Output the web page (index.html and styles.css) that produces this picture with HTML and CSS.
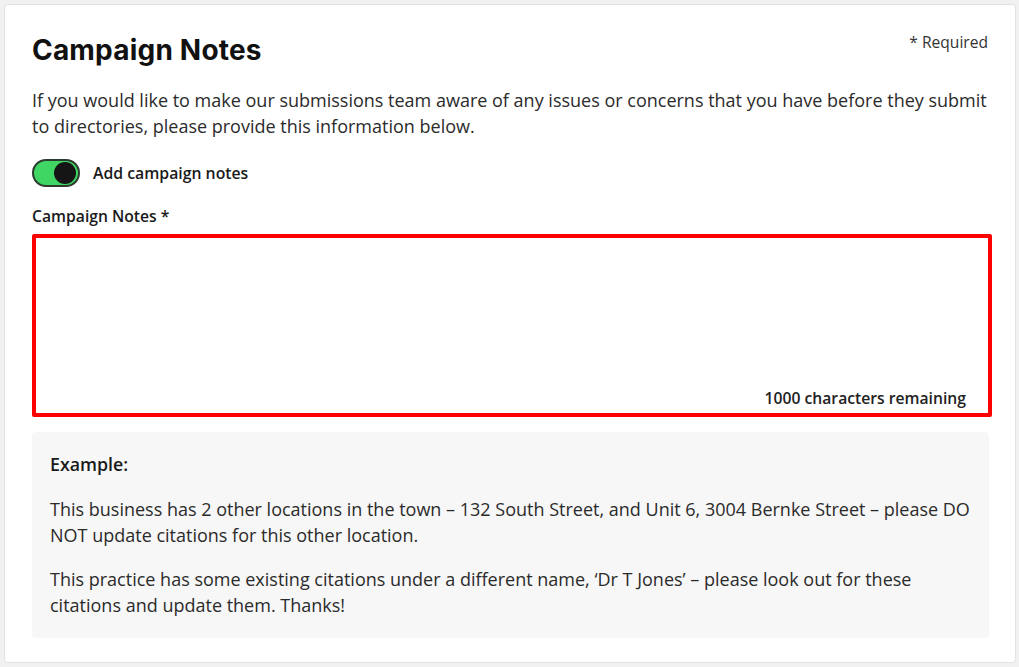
FILE: index.html
```html
<!DOCTYPE html>
<html lang="en">
<head>
  <meta charset="UTF-8" />
  <meta name="viewport" content="width=device-width, initial-scale=1.0"/>
  <title>Campaign Notes</title>
  <link rel="stylesheet" href="styles.css">
</head>
<body>
  <div class="card">
    <div class="card-head">
      <h1>Campaign Notes</h1>
      <span class="required">* Required</span>
    </div>
    <p class="intro">If you would like to make our submissions team aware of any issues or concerns that you have before they submit to directories, please provide this information below.</p>

    <label class="switch-row">
      <span class="switch"><span class="knob"></span></span>
      <span class="switch-label">Add campaign notes</span>
    </label>

    <div class="field-label">Campaign Notes *</div>
    <div class="notes-box">
      <textarea class="notes" maxlength="1000"></textarea>
      <div class="counter">1000 characters remaining</div>
    </div>

    <div class="example">
      <div class="example-title">Example:</div>
      <p>This business has 2 other locations in the town – 132 South Street, and Unit 6, 3004 Bernke Street – please DO NOT update citations for this other location.</p>
      <p>This practice has some existing citations under a different name, ‘Dr T Jones’ – please look out for these citations and update them. Thanks!</p>
    </div>
  </div>
</body>
</html>
```

FILE: styles.css
```css
body {
  margin: 0;
  padding: 4px 3px 4px 4px;
  background-color: #f1f1f1;
  font-family: 'Open Sans', sans-serif;
  color: #222;
}
.card {
  background-color: white;
  border: 1px solid #e2e2e2;
  border-radius: 4px;
  padding: 23px 26px 26px 27px;
  height: 659px;
  box-sizing: border-box;
}
.card-head {
  display: flex;
  justify-content: space-between;
  align-items: flex-start;
}
h1 {
  font-family: 'Inter', sans-serif;
  font-weight: 700;
  font-size: 28px;
  letter-spacing: 0.2px;
  color: #111;
  margin: 6px 0 0 0;
  line-height: 32px;
}
.required {
  font-size: 15.6px;
  color: #333;
  margin-top: 3px;
  margin-right: 1px;
}
.intro {
  font-size: 18px;
  line-height: 26px;
  margin: 21px 0 0 0;
  color: #2b2b2b;
}
.switch-row {
  display: flex;
  align-items: center;
  margin-top: 20px;
}
.switch {
  height: 24px;
  width: 40px;
  background-color: #3fd663;
  border: 2px solid #2d3a30;
  border-radius: 14px;
  display: flex;
  align-items: center;
  justify-content: flex-end;
  padding: 0 2px;
  box-sizing: content-box;
}
.knob {
  width: 22px;
  height: 22px;
  border-radius: 50%;
  background-color: #151515;
}
.switch-label {
  font-weight: 600;
  font-size: 15.8px;
  margin-left: 13px;
  color: #1a1a1a;
}
.field-label {
  font-weight: 600;
  font-size: 15.7px;
  margin-top: 18px;
  color: #1a1a1a;
}
.notes-box {
  position: relative;
  margin-top: 7px;
  margin-right: -3px;
}
.notes {
  display: block;
  width: 100%;
  height: 183px;
  box-sizing: border-box;
  border: 4px solid #ff0000;
  border-radius: 2px;
  resize: none;
  outline: none;
  font-family: 'Open Sans', sans-serif;
  font-size: 16px;
  padding: 10px 14px;
}
.counter {
  position: absolute;
  right: 26px;
  bottom: 8px;
  font-weight: 600;
  font-size: 15.7px;
  color: #222;
}
.example {
  background-color: #f7f7f7;
  border-radius: 4px;
  margin-top: 15px;
  padding: 20px 18px 20px 18px;
}
.example-title {
  font-weight: 600;
  font-size: 17.8px;
  margin-bottom: 20px;
  color: #1a1a1a;
}
.example p {
  font-size: 18px;
  line-height: 26px;
  margin: 0 0 18px 0;
  color: #2b2b2b;
}
.example p:last-child {
  margin-bottom: 0;
}
```
